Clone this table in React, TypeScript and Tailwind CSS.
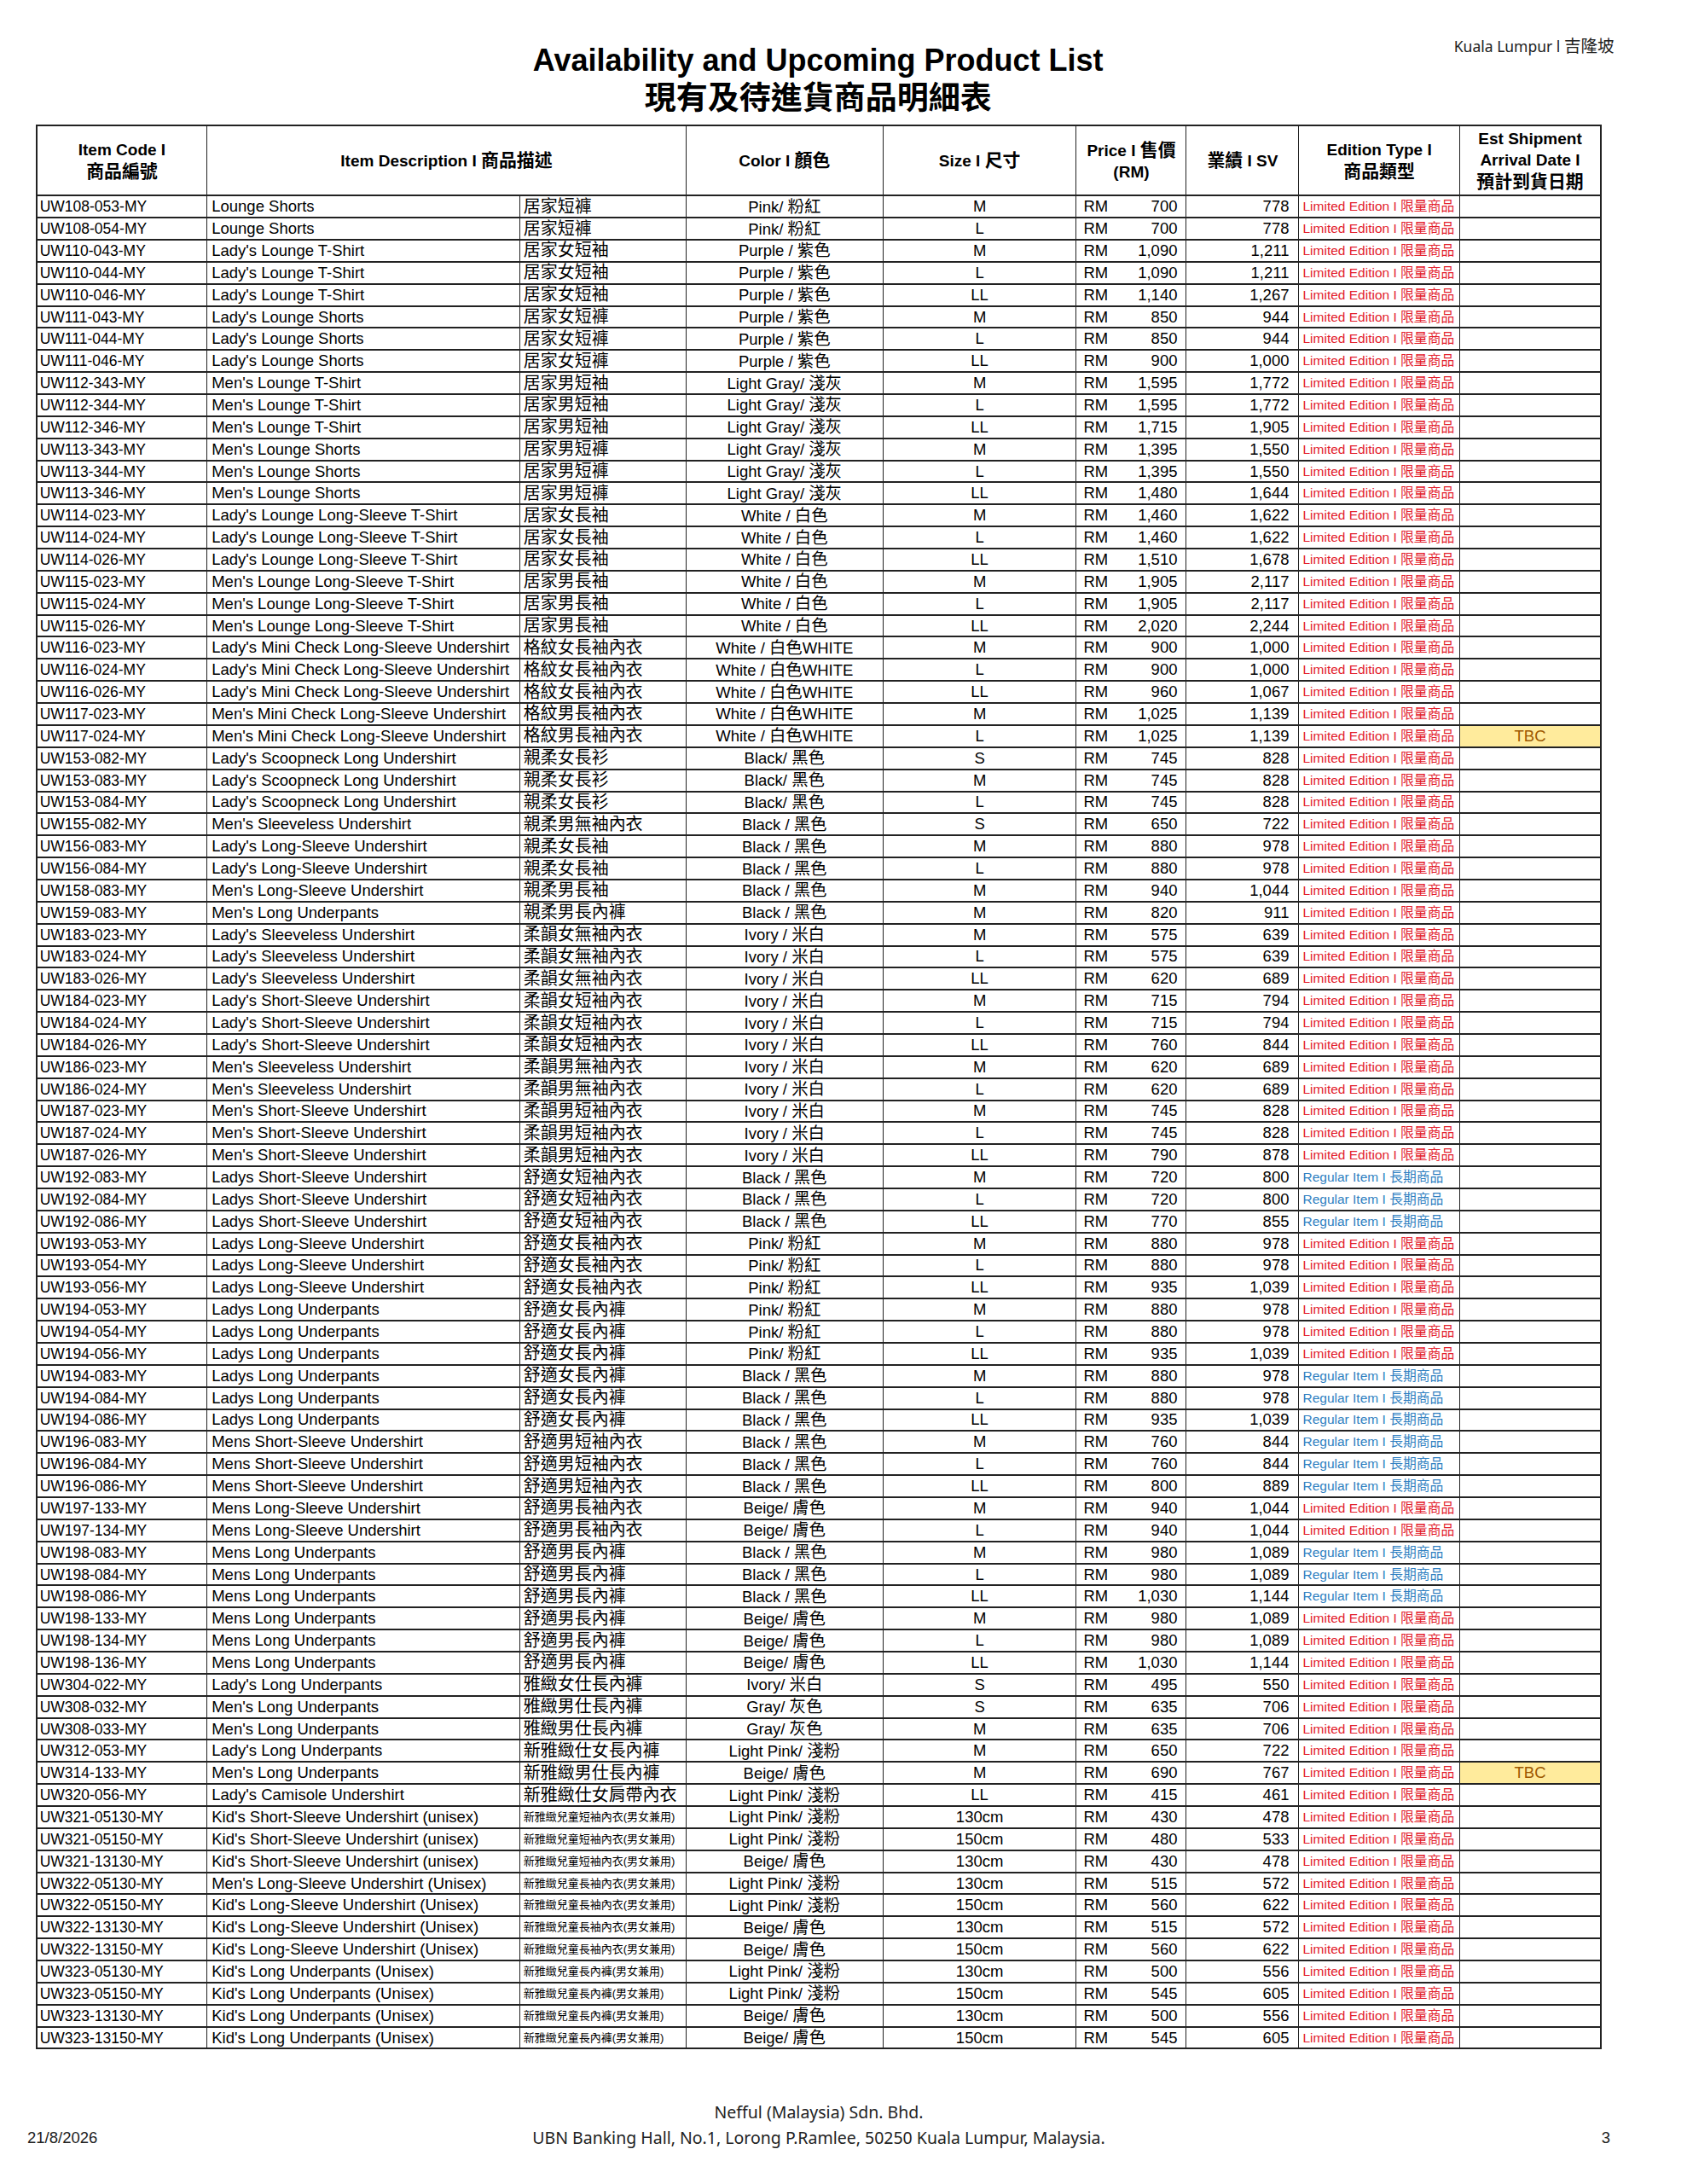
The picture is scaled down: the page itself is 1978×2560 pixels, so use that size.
import React from "react";

type Row = [string, string, string, string, string, string, string, "L" | "R", boolean?];

const rows: Row[] = [
  ["UW108-053-MY", "Lounge Shorts", "居家短褲", "Pink/ 粉紅", "M", "700", "778", "L"],
  ["UW108-054-MY", "Lounge Shorts", "居家短褲", "Pink/ 粉紅", "L", "700", "778", "L"],
  ["UW110-043-MY", "Lady's Lounge T-Shirt", "居家女短袖", "Purple / 紫色", "M", "1,090", "1,211", "L"],
  ["UW110-044-MY", "Lady's Lounge T-Shirt", "居家女短袖", "Purple / 紫色", "L", "1,090", "1,211", "L"],
  ["UW110-046-MY", "Lady's Lounge T-Shirt", "居家女短袖", "Purple / 紫色", "LL", "1,140", "1,267", "L"],
  ["UW111-043-MY", "Lady's Lounge Shorts", "居家女短褲", "Purple / 紫色", "M", "850", "944", "L"],
  ["UW111-044-MY", "Lady's Lounge Shorts", "居家女短褲", "Purple / 紫色", "L", "850", "944", "L"],
  ["UW111-046-MY", "Lady's Lounge Shorts", "居家女短褲", "Purple / 紫色", "LL", "900", "1,000", "L"],
  ["UW112-343-MY", "Men's Lounge T-Shirt", "居家男短袖", "Light Gray/ 淺灰", "M", "1,595", "1,772", "L"],
  ["UW112-344-MY", "Men's Lounge T-Shirt", "居家男短袖", "Light Gray/ 淺灰", "L", "1,595", "1,772", "L"],
  ["UW112-346-MY", "Men's Lounge T-Shirt", "居家男短袖", "Light Gray/ 淺灰", "LL", "1,715", "1,905", "L"],
  ["UW113-343-MY", "Men's Lounge Shorts", "居家男短褲", "Light Gray/ 淺灰", "M", "1,395", "1,550", "L"],
  ["UW113-344-MY", "Men's Lounge Shorts", "居家男短褲", "Light Gray/ 淺灰", "L", "1,395", "1,550", "L"],
  ["UW113-346-MY", "Men's Lounge Shorts", "居家男短褲", "Light Gray/ 淺灰", "LL", "1,480", "1,644", "L"],
  ["UW114-023-MY", "Lady's Lounge Long-Sleeve T-Shirt", "居家女長袖", "White / 白色", "M", "1,460", "1,622", "L"],
  ["UW114-024-MY", "Lady's Lounge Long-Sleeve T-Shirt", "居家女長袖", "White / 白色", "L", "1,460", "1,622", "L"],
  ["UW114-026-MY", "Lady's Lounge Long-Sleeve T-Shirt", "居家女長袖", "White / 白色", "LL", "1,510", "1,678", "L"],
  ["UW115-023-MY", "Men's Lounge Long-Sleeve T-Shirt", "居家男長袖", "White / 白色", "M", "1,905", "2,117", "L"],
  ["UW115-024-MY", "Men's Lounge Long-Sleeve T-Shirt", "居家男長袖", "White / 白色", "L", "1,905", "2,117", "L"],
  ["UW115-026-MY", "Men's Lounge Long-Sleeve T-Shirt", "居家男長袖", "White / 白色", "LL", "2,020", "2,244", "L"],
  ["UW116-023-MY", "Lady's Mini Check Long-Sleeve Undershirt", "格紋女長袖內衣", "White / 白色WHITE", "M", "900", "1,000", "L"],
  ["UW116-024-MY", "Lady's Mini Check Long-Sleeve Undershirt", "格紋女長袖內衣", "White / 白色WHITE", "L", "900", "1,000", "L"],
  ["UW116-026-MY", "Lady's Mini Check Long-Sleeve Undershirt", "格紋女長袖內衣", "White / 白色WHITE", "LL", "960", "1,067", "L"],
  ["UW117-023-MY", "Men's Mini Check Long-Sleeve Undershirt", "格紋男長袖內衣", "White / 白色WHITE", "M", "1,025", "1,139", "L"],
  ["UW117-024-MY", "Men's Mini Check Long-Sleeve Undershirt", "格紋男長袖內衣", "White / 白色WHITE", "L", "1,025", "1,139", "L", true],
  ["UW153-082-MY", "Lady's Scoopneck Long Undershirt", "親柔女長衫", "Black/ 黑色", "S", "745", "828", "L"],
  ["UW153-083-MY", "Lady's Scoopneck Long Undershirt", "親柔女長衫", "Black/ 黑色", "M", "745", "828", "L"],
  ["UW153-084-MY", "Lady's Scoopneck Long Undershirt", "親柔女長衫", "Black/ 黑色", "L", "745", "828", "L"],
  ["UW155-082-MY", "Men's Sleeveless Undershirt", "親柔男無袖內衣", "Black / 黑色", "S", "650", "722", "L"],
  ["UW156-083-MY", "Lady's Long-Sleeve Undershirt", "親柔女長袖", "Black / 黑色", "M", "880", "978", "L"],
  ["UW156-084-MY", "Lady's Long-Sleeve Undershirt", "親柔女長袖", "Black / 黑色", "L", "880", "978", "L"],
  ["UW158-083-MY", "Men's Long-Sleeve Undershirt", "親柔男長袖", "Black / 黑色", "M", "940", "1,044", "L"],
  ["UW159-083-MY", "Men's Long Underpants", "親柔男長內褲", "Black / 黑色", "M", "820", "911", "L"],
  ["UW183-023-MY", "Lady's Sleeveless Undershirt", "柔韻女無袖內衣", "Ivory / 米白", "M", "575", "639", "L"],
  ["UW183-024-MY", "Lady's Sleeveless Undershirt", "柔韻女無袖內衣", "Ivory / 米白", "L", "575", "639", "L"],
  ["UW183-026-MY", "Lady's Sleeveless Undershirt", "柔韻女無袖內衣", "Ivory / 米白", "LL", "620", "689", "L"],
  ["UW184-023-MY", "Lady's Short-Sleeve Undershirt", "柔韻女短袖內衣", "Ivory / 米白", "M", "715", "794", "L"],
  ["UW184-024-MY", "Lady's Short-Sleeve Undershirt", "柔韻女短袖內衣", "Ivory / 米白", "L", "715", "794", "L"],
  ["UW184-026-MY", "Lady's Short-Sleeve Undershirt", "柔韻女短袖內衣", "Ivory / 米白", "LL", "760", "844", "L"],
  ["UW186-023-MY", "Men's Sleeveless Undershirt", "柔韻男無袖內衣", "Ivory / 米白", "M", "620", "689", "L"],
  ["UW186-024-MY", "Men's Sleeveless Undershirt", "柔韻男無袖內衣", "Ivory / 米白", "L", "620", "689", "L"],
  ["UW187-023-MY", "Men's Short-Sleeve Undershirt", "柔韻男短袖內衣", "Ivory / 米白", "M", "745", "828", "L"],
  ["UW187-024-MY", "Men's Short-Sleeve Undershirt", "柔韻男短袖內衣", "Ivory / 米白", "L", "745", "828", "L"],
  ["UW187-026-MY", "Men's Short-Sleeve Undershirt", "柔韻男短袖內衣", "Ivory / 米白", "LL", "790", "878", "L"],
  ["UW192-083-MY", "Ladys Short-Sleeve Undershirt", "舒適女短袖內衣", "Black / 黑色", "M", "720", "800", "R"],
  ["UW192-084-MY", "Ladys Short-Sleeve Undershirt", "舒適女短袖內衣", "Black / 黑色", "L", "720", "800", "R"],
  ["UW192-086-MY", "Ladys Short-Sleeve Undershirt", "舒適女短袖內衣", "Black / 黑色", "LL", "770", "855", "R"],
  ["UW193-053-MY", "Ladys Long-Sleeve Undershirt", "舒適女長袖內衣", "Pink/ 粉紅", "M", "880", "978", "L"],
  ["UW193-054-MY", "Ladys Long-Sleeve Undershirt", "舒適女長袖內衣", "Pink/ 粉紅", "L", "880", "978", "L"],
  ["UW193-056-MY", "Ladys Long-Sleeve Undershirt", "舒適女長袖內衣", "Pink/ 粉紅", "LL", "935", "1,039", "L"],
  ["UW194-053-MY", "Ladys Long Underpants", "舒適女長內褲", "Pink/ 粉紅", "M", "880", "978", "L"],
  ["UW194-054-MY", "Ladys Long Underpants", "舒適女長內褲", "Pink/ 粉紅", "L", "880", "978", "L"],
  ["UW194-056-MY", "Ladys Long Underpants", "舒適女長內褲", "Pink/ 粉紅", "LL", "935", "1,039", "L"],
  ["UW194-083-MY", "Ladys Long Underpants", "舒適女長內褲", "Black / 黑色", "M", "880", "978", "R"],
  ["UW194-084-MY", "Ladys Long Underpants", "舒適女長內褲", "Black / 黑色", "L", "880", "978", "R"],
  ["UW194-086-MY", "Ladys Long Underpants", "舒適女長內褲", "Black / 黑色", "LL", "935", "1,039", "R"],
  ["UW196-083-MY", "Mens Short-Sleeve Undershirt", "舒適男短袖內衣", "Black / 黑色", "M", "760", "844", "R"],
  ["UW196-084-MY", "Mens Short-Sleeve Undershirt", "舒適男短袖內衣", "Black / 黑色", "L", "760", "844", "R"],
  ["UW196-086-MY", "Mens Short-Sleeve Undershirt", "舒適男短袖內衣", "Black / 黑色", "LL", "800", "889", "R"],
  ["UW197-133-MY", "Mens Long-Sleeve Undershirt", "舒適男長袖內衣", "Beige/ 膚色", "M", "940", "1,044", "L"],
  ["UW197-134-MY", "Mens Long-Sleeve Undershirt", "舒適男長袖內衣", "Beige/ 膚色", "L", "940", "1,044", "L"],
  ["UW198-083-MY", "Mens Long Underpants", "舒適男長內褲", "Black / 黑色", "M", "980", "1,089", "R"],
  ["UW198-084-MY", "Mens Long Underpants", "舒適男長內褲", "Black / 黑色", "L", "980", "1,089", "R"],
  ["UW198-086-MY", "Mens Long Underpants", "舒適男長內褲", "Black / 黑色", "LL", "1,030", "1,144", "R"],
  ["UW198-133-MY", "Mens Long Underpants", "舒適男長內褲", "Beige/ 膚色", "M", "980", "1,089", "L"],
  ["UW198-134-MY", "Mens Long Underpants", "舒適男長內褲", "Beige/ 膚色", "L", "980", "1,089", "L"],
  ["UW198-136-MY", "Mens Long Underpants", "舒適男長內褲", "Beige/ 膚色", "LL", "1,030", "1,144", "L"],
  ["UW304-022-MY", "Lady's Long Underpants", "雅緻女仕長內褲", "Ivory/ 米白", "S", "495", "550", "L"],
  ["UW308-032-MY", "Men's Long Underpants", "雅緻男仕長內褲", "Gray/ 灰色", "S", "635", "706", "L"],
  ["UW308-033-MY", "Men's Long Underpants", "雅緻男仕長內褲", "Gray/ 灰色", "M", "635", "706", "L"],
  ["UW312-053-MY", "Lady's Long Underpants", "新雅緻仕女長內褲", "Light Pink/ 淺粉", "M", "650", "722", "L"],
  ["UW314-133-MY", "Men's Long Underpants", "新雅緻男仕長內褲", "Beige/ 膚色", "M", "690", "767", "L", true],
  ["UW320-056-MY", "Lady's Camisole Undershirt", "新雅緻仕女肩帶內衣", "Light Pink/ 淺粉", "LL", "415", "461", "L"],
  ["UW321-05130-MY", "Kid's Short-Sleeve Undershirt (unisex)", "新雅緻兒童短袖內衣(男女兼用)", "Light Pink/ 淺粉", "130cm", "430", "478", "L"],
  ["UW321-05150-MY", "Kid's Short-Sleeve Undershirt (unisex)", "新雅緻兒童短袖內衣(男女兼用)", "Light Pink/ 淺粉", "150cm", "480", "533", "L"],
  ["UW321-13130-MY", "Kid's Short-Sleeve Undershirt (unisex)", "新雅緻兒童短袖內衣(男女兼用)", "Beige/ 膚色", "130cm", "430", "478", "L"],
  ["UW322-05130-MY", "Men's Long-Sleeve Undershirt (Unisex)", "新雅緻兒童長袖內衣(男女兼用)", "Light Pink/ 淺粉", "130cm", "515", "572", "L"],
  ["UW322-05150-MY", "Kid's Long-Sleeve Undershirt (Unisex)", "新雅緻兒童長袖內衣(男女兼用)", "Light Pink/ 淺粉", "150cm", "560", "622", "L"],
  ["UW322-13130-MY", "Kid's Long-Sleeve Undershirt (Unisex)", "新雅緻兒童長袖內衣(男女兼用)", "Beige/ 膚色", "130cm", "515", "572", "L"],
  ["UW322-13150-MY", "Kid's Long-Sleeve Undershirt (Unisex)", "新雅緻兒童長袖內衣(男女兼用)", "Beige/ 膚色", "150cm", "560", "622", "L"],
  ["UW323-05130-MY", "Kid's Long Underpants (Unisex)", "新雅緻兒童長內褲(男女兼用)", "Light Pink/ 淺粉", "130cm", "500", "556", "L"],
  ["UW323-05150-MY", "Kid's Long Underpants (Unisex)", "新雅緻兒童長內褲(男女兼用)", "Light Pink/ 淺粉", "150cm", "545", "605", "L"],
  ["UW323-13130-MY", "Kid's Long Underpants (Unisex)", "新雅緻兒童長內褲(男女兼用)", "Beige/ 膚色", "130cm", "500", "556", "L"],
  ["UW323-13150-MY", "Kid's Long Underpants (Unisex)", "新雅緻兒童長內褲(男女兼用)", "Beige/ 膚色", "150cm", "545", "605", "L"],
];

const CJK = /([\u2E80-\u9FFF\uF900-\uFAFF\uFF00-\uFFEF\u3000-\u303F]+)/;

function T({ s, c = "text-[1.08em]" }: { s: string; c?: string }) {
  const parts = s.split(CJK);
  return (
    <>
      {parts.map((p, i) =>
        i % 2 === 1 ? (
          <span key={i} className={c}>
            {p}
          </span>
        ) : (
          <React.Fragment key={i}>{p}</React.Fragment>
        )
      )}
    </>
  );
}

const cell = "border-x border-y-2 border-[#222] p-0 align-middle whitespace-nowrap overflow-hidden leading-[20px]";
const head = "border-x border-y-2 border-[#222] p-0 align-middle text-center font-bold text-[19px] leading-[25px]";

export default function App() {
  return (
    <div className="w-[1978px] h-[2560px] bg-white text-black font-['Liberation_Sans','Noto_Sans_CJK_TC',sans-serif] flex flex-col">
      {/* Top header */}
      <div className="ml-[41.7px] w-[1835px] grid grid-cols-[1fr_auto_1fr] pt-[42px]">
        <div />
        <div className="flex flex-col items-center mt-[8.5px]">
          <div className="text-[36px] leading-[40px] font-bold">Availability and Upcoming Product List</div>
          <div className="text-[37px] leading-[42px] font-bold mt-[4.8px]">現有及待進貨商品明細表</div>
        </div>
        <div className="justify-self-end mr-[-16px] text-[17.5px] leading-[24px] font-['Noto_Sans','Noto_Sans_CJK_TC',sans-serif] text-[#222]">
          <T s="Kuala Lumpur l 吉隆坡" c="text-[1.12em]" />
        </div>
      </div>

      {/* Table */}
      <div className="ml-[41.7px] mt-[9px]">
        <table className="border-collapse table-fixed w-[1835px] border-2 border-[#222]">
          <colgroup>
            <col className="w-[200px]" />
            <col className="w-[366.6px]" />
            <col className="w-[195px]" />
            <col className="w-[231px]" />
            <col className="w-[226.7px]" />
            <col className="w-[129px]" />
            <col className="w-[132px]" />
            <col className="w-[188.3px]" />
            <col className="w-[166px]" />
          </colgroup>
          <thead>
            <tr className="h-[82px]">
              <th className={head}>
                <div>Item Code I</div>
                <div>
                  <T s="商品編號" c="text-[1.1em]" />
                </div>
              </th>
              <th className={head} colSpan={2}>
                <T s="Item Description I 商品描述" c="text-[1.1em]" />
              </th>
              <th className={head}>
                <T s="Color I 顏色" c="text-[1.1em]" />
              </th>
              <th className={head}>
                <T s="Size I 尺寸" c="text-[1.1em]" />
              </th>
              <th className={head}>
                <div>
                  <T s="Price I 售價" c="text-[1.1em]" />
                </div>
                <div>(RM)</div>
              </th>
              <th className={head}>
                <T s="業績 I SV" c="text-[1.1em]" />
              </th>
              <th className={head}>
                <div>Edition Type I</div>
                <div>
                  <T s="商品類型" c="text-[1.1em]" />
                </div>
              </th>
              <th className={head}>
                <div>Est Shipment</div>
                <div>Arrival Date I</div>
                <div>
                  <T s="預計到貨日期" c="text-[1.1em]" />
                </div>
              </th>
            </tr>
          </thead>
          <tbody>
            {rows.map((r) => {
              const [code, en, cn, color, size, price, sv, type, tbc] = r;
              const kid = cn.includes("(男女兼用)");
              return (
                <tr key={code} className="h-[25.87px]">
                  <td className={`${cell} pl-[3px] text-[17.5px]`}>{code}</td>
                  <td className={`${cell} pl-[5px] text-[18.5px]`}>{en}</td>
                  <td className={`${cell} pl-[4px] ${kid ? "text-[13px]" : "text-[18.5px]"}`}>
                    {kid ? cn : <T s={cn} />}
                  </td>
                  <td className={`${cell} text-center text-[18.5px]`}>
                    <T s={color} c="text-[1.05em]" />
                  </td>
                  <td className={`${cell} text-center text-[18.5px]`}>{size}</td>
                  <td className={`${cell} text-[18.5px]`}>
                    <div className="flex justify-between pl-[8px] pr-[10px]">
                      <span>RM</span>
                      <span>{price}</span>
                    </div>
                  </td>
                  <td className={`${cell} text-right pr-[11px] text-[18.5px]`}>{sv}</td>
                  <td
                    className={`${cell} pl-[4px] text-[15.5px] ${
                      type === "L" ? "text-[#e3202c]" : "text-[#2f7fc1]"
                    }`}
                  >
                    {type === "L" ? (
                      <T s="Limited Edition I 限量商品" c="text-[1.02em]" />
                    ) : (
                      <T s="Regular Item I 長期商品" c="text-[1.02em]" />
                    )}
                  </td>
                  <td
                    className={`${cell} text-center text-[18.5px] ${
                      tbc ? "bg-[#ffeb9c] text-[#9c5700]" : ""
                    }`}
                  >
                    {tbc ? "TBC" : ""}
                  </td>
                </tr>
              );
            })}
          </tbody>
        </table>
      </div>

      {/* Footer */}
      <div className="mt-[59px] pl-[32px] pr-[90px] grid grid-cols-[1fr_auto_1fr] items-end">
        <div className="text-[18.5px] leading-[29.5px] text-[#222]">21/8/2026</div>
        <div className="text-center text-[19.5px] leading-[29.5px] font-['Noto_Sans','Open_Sans',sans-serif] text-[#222]">
          <div>Nefful (Malaysia) Sdn. Bhd.</div>
          <div>UBN Banking Hall, No.1, Lorong P.Ramlee, 50250 Kuala Lumpur, Malaysia.</div>
        </div>
        <div className="justify-self-end text-[18.5px] leading-[29.5px] text-[#222]">3</div>
      </div>
    </div>
  );
}
